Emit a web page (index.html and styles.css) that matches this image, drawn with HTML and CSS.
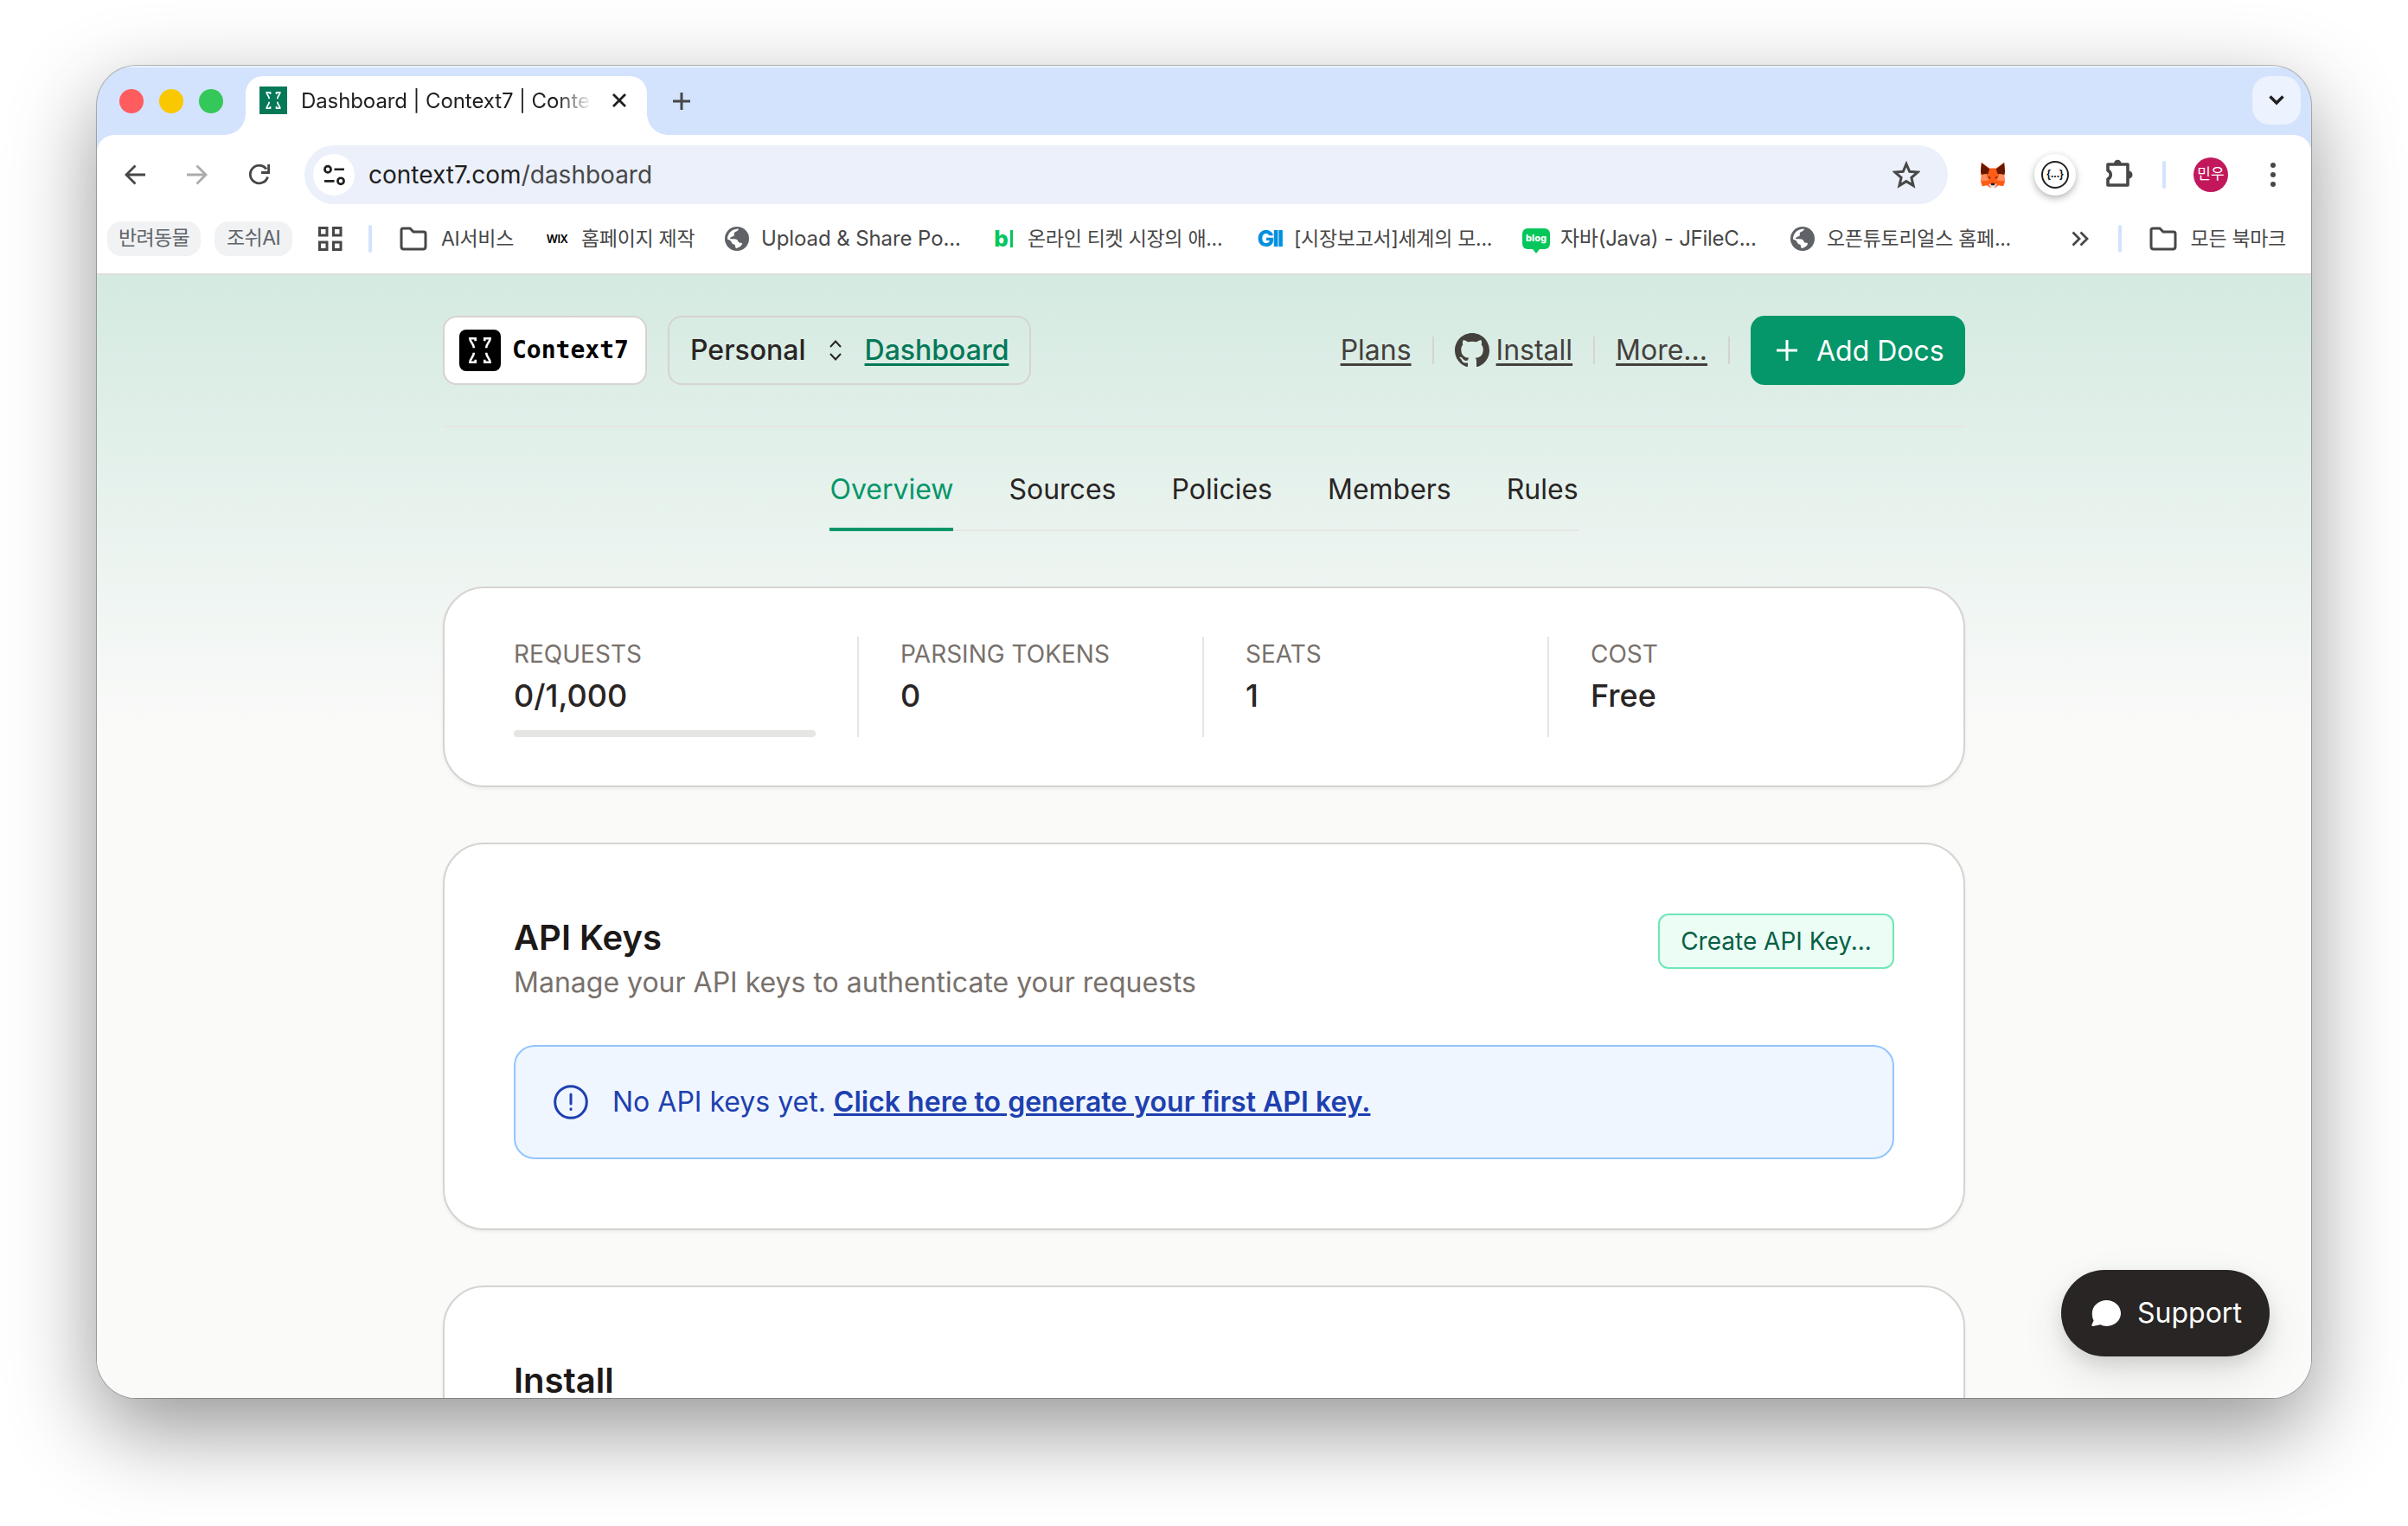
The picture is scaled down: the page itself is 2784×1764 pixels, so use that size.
FILE: index.html
```
<!DOCTYPE html>
<html lang="ko">
<head>
    <meta charset="UTF-8">
    <meta name="viewport" content="width=device-width, initial-scale=1.0">
    <title>Dashboard | Context7</title>
    <link rel="stylesheet" href="styles.css">
</head>
<body>
    <!-- Shared icons -->
    <svg class="sprite" aria-hidden="true">
        <symbol id="icon-folder" viewBox="0 0 32 28">
            <path d="M4 2h8l4 4h12q2 0 2 2v15q0 3-3 3H5q-3 0-3-3V4q0-2 2-2z" fill="none" stroke="currentColor" stroke-width="3"/>
        </symbol>
        <symbol id="icon-globe" viewBox="0 0 28 28">
            <circle cx="14" cy="14" r="14" fill="#5f6368"/>
            <path d="M16 2.500c-1 3.500-4 3-5 4.500s1 3-1 4-4 1-4 3c2 1 6-.5 8 1s1 3 3 3.500 3-.5 3 1.500c-1 3-4 4-6.500 5-2-.5-1-3-2-4s-3-.5-3.500-2.500C7 15.500 4 15 3 14.500 3 8 8 2.500 16 2.500z" fill="#fff"/>
        </symbol>
        <symbol id="icon-context7" viewBox="0 0 28 28">
            <g fill="none" stroke="#fff" stroke-width="1.500">
                <path d="M10.900 7.800V6H7.200c0 2.400 2.600 3.200 2.600 6.400"/>
                <path d="M17.100 7.800V6h3.700c0 2.400-2.600 3.200-2.600 6.400"/>
                <path d="M10.900 20.200V22H7.200c0-2.400 2.600-3.200 2.600-6.400"/>
                <path d="M17.100 20.200V22h3.700c0-2.400-2.600-3.200-2.600-6.400"/>
            </g>
        </symbol>
    </svg>

    <div class="window">
        <!-- Tab strip -->
        <div class="tab-strip">
            <div class="lights">
                <span class="light red"></span>
                <span class="light yellow"></span>
                <span class="light green"></span>
            </div>
            <div class="tab">
                <svg class="favicon"><use href="#icon-context7"/></svg>
                <span class="tab-title">Dashboard | Context7 | Context7</span>
                <svg class="tab-close" viewBox="0 0 16 16"><path d="M1 1l14 14M15 1L1 15" stroke="#1f1f1f" stroke-width="2.800"/></svg>
            </div>
            <svg class="new-tab" viewBox="0 0 20 20"><path d="M10 0v20M0 10h20" stroke="#474747" stroke-width="3"/></svg>
            <div class="tab-search">
                <svg viewBox="0 0 18 12"><path d="M1.500 1.500L9 9l7.500-7.500" fill="none" stroke="#1f1f1f" stroke-width="3.400"/></svg>
            </div>
        </div>

        <!-- Address bar -->
        <div class="toolbar">
            <div class="nav-buttons">
                <svg viewBox="0 0 24 24"><path d="M24 12H2M12.500 1.500L2 12l10.500 10.500" fill="none" stroke="#474747" stroke-width="2.800"/></svg>
                <svg viewBox="0 0 24 24"><path d="M0 12h22M11.500 1.500L22 12 11.500 22.500" fill="none" stroke="#ababab" stroke-width="2.800"/></svg>
                <svg viewBox="0 0 24 24"><path d="M21.500 14.500A10.300 10.300 0 1 1 20 5.500" fill="none" stroke="#474747" stroke-width="2.800"/><path d="M22.600 0v9.500H14" fill="none" stroke="#474747" stroke-width="2.800"/></svg>
            </div>
            <div class="omnibox">
                <div class="site-info">
                    <svg viewBox="0 0 24 24" fill="none" stroke="#1f1f1f" stroke-width="2.600"><circle cx="4.800" cy="5.500" r="3.400"/><path d="M12 5.500h11M1 18.500h11"/><circle cx="19.200" cy="18.500" r="3.400"/></svg>
                </div>
                <span class="url">context7.com<span class="path">/dashboard</span></span>
                <svg class="star" viewBox="0 0 32 32"><path d="M16 3.500l3.700 8.800 9.400.8-7.200 6.200 2.200 9.300-8.100-5-8.100 5 2.200-9.300-7.200-6.200 9.400-.8z" fill="none" stroke="#474747" stroke-width="3"/></svg>
            </div>
            <div class="extensions">
                <svg class="fox" viewBox="0 0 32 32">
                    <path d="M2 1l10 7h8l10-7 1 12-1 5 1 6-2 6-6-1-4 3h-6l-4-3-6 1-2-6 1-6-1-5z" fill="#ff5c16"/>
                    <path d="M2 1l10 8-2 6-8 1-1-4zM30 1L20 9l2 6 8 1 1-4z" fill="#661800"/>
                    <path d="M2 16l6-1 3 8-10 1zM30 16l-6-1-3 8 10 1z" fill="#ff8d5d"/>
                    <path d="M9 18l4 1v2zM23 18l-4 1v2z" fill="#661800"/>
                    <path d="M11 28l4-1h2l4 1-3 4h-4z" fill="#e7ebf6"/>
                    <path d="M14 26h4l.5 3h-5z" fill="#3b1d12"/>
                </svg>
                <div class="json-badge">
                    <div class="json-ring">{...}</div>
                </div>
                <svg class="puzzle" viewBox="0 0 34 34"><path d="M4 7h23v24H4v-7a5.500 5.500 0 0 0 0-10z" fill="none" stroke="#474747" stroke-width="3.600" stroke-linejoin="round"/><path d="M11 6a4.300 4.300 0 0 1 8.600 0zM28 14.500a4.500 4.500 0 0 1 0 9z" fill="#474747"/></svg>
                <span class="separator"></span>
                <div class="avatar">민우</div>
                <svg class="dots" viewBox="0 0 6 28"><circle cx="3" cy="3" r="3"/><circle cx="3" cy="14" r="3"/><circle cx="3" cy="25" r="3"/></svg>
            </div>
        </div>

        <!-- Bookmarks -->
        <div class="bookmarks">
            <span class="chip chip-first">반려동물</span>
            <span class="chip chip-second">조쉬AI</span>
            <svg class="apps" viewBox="0 0 28 28" fill="none" stroke="#474747" stroke-width="3"><path d="M1.500 1.500h8.500V10H1.500zM17.500 1.500H26V10h-8.500zM1.500 18h8.500v8.500H1.500zM17.500 18H26v8.500h-8.500z"/></svg>
            <span class="separator"></span>
            <div class="bookmark bookmark-folder"><svg class="folder"><use href="#icon-folder"/></svg><span class="ko">AI서비스</span></div>
            <div class="bookmark bookmark-wix"><span class="icon wix">WIX</span><span class="ko">홈페이지 제작</span></div>
            <div class="bookmark"><span class="icon"><svg class="globe"><use href="#icon-globe"/></svg></span><span class="en">Upload &amp; Share Po...</span></div>
            <div class="bookmark"><span class="icon blue-letter"><b>b</b><span class="bar"></span></span><span class="ko">온라인 티켓 시장의 애...</span></div>
            <div class="bookmark"><span class="icon gii">GII</span><span class="ko">[시장보고서]세계의 모...</span></div>
            <div class="bookmark"><span class="icon"><span class="blog">blog</span></span><span class="mix">자바(Java) - JFileC...</span></div>
            <div class="bookmark"><span class="icon"><svg class="globe"><use href="#icon-globe"/></svg></span><span class="ko">오픈튜토리얼스 홈페...</span></div>
            <div class="bookmarks-end">
                <svg class="more" viewBox="0 0 20 18"><path d="M1.500 1.500L9 9l-7.500 7.500M10.500 1.500L18 9l-7.500 7.500" fill="none" stroke="#474747" stroke-width="2.800"/></svg>
                <span class="separator"></span>
                <svg class="folder"><use href="#icon-folder"/></svg>
                <span class="ko">모든 북마크</span>
            </div>
        </div>

        <!-- Page -->
        <main class="page">
            <div class="container">
                <header class="header">
                    <a class="brand"><svg class="brand-icon"><use href="#icon-context7"/></svg>Context7</a>
                    <div class="workspace">
                        <span>Personal</span>
                        <svg viewBox="0 0 14 24"><path d="M1 8l6-6.500L13 8M1 16l6 6.500 6-6.500" fill="none" stroke="#292524" stroke-width="2"/></svg>
                        <a class="link-green">Dashboard</a>
                    </div>
                    <nav class="nav">
                        <a class="link">Plans</a>
                        <span class="divider"></span>
                        <span class="install">
                            <svg viewBox="0 0 16 16"><path fill="#44403c" d="M8 0C3.580 0 0 3.580 0 8c0 3.540 2.290 6.530 5.470 7.590.4.070.55-.17.55-.38 0-.19-.01-.82-.01-1.490-2.010.37-2.530-.49-2.690-.94-.09-.23-.48-.94-.82-1.130-.28-.15-.68-.52-.01-.53.63-.01 1.080.58 1.230.82.72 1.210 1.870.87 2.330.66.07-.52.28-.87.51-1.070-1.780-.2-3.640-.89-3.640-3.950 0-.87.31-1.590.82-2.150-.08-.2-.36-1.020.08-2.120 0 0 .67-.21 2.200.82.64-.18 1.320-.27 2-.27s1.360.09 2 .27c1.530-1.040 2.200-.82 2.200-.82.44 1.100.16 1.920.08 2.120.51.56.82 1.270.82 2.150 0 3.070-1.870 3.750-3.650 3.950.29.25.54.73.54 1.480 0 1.070-.01 1.930-.01 2.200 0 .21.15.46.55.38A8.010 8.010 0 0 0 16 8c0-4.420-3.580-8-8-8z"/></svg>
                            <a class="link">Install</a>
                        </span>
                        <span class="divider"></span>
                        <a class="link">More...</a>
                        <span class="divider"></span>
                        <button class="add-btn"><svg viewBox="0 0 24 24"><path d="M12 0v24M0 12h24" stroke="#fff" stroke-width="3"/></svg>Add Docs</button>
                    </nav>
                </header>

                <div class="tabs">
                    <a class="active">Overview</a>
                    <a>Sources</a>
                    <a>Policies</a>
                    <a>Members</a>
                    <a>Rules</a>
                </div>

                <section class="card stats">
                    <div class="stat">
                        <div class="stat-label">REQUESTS</div>
                        <div class="stat-value">0/1,000</div>
                        <div class="progress"></div>
                    </div>
                    <div class="stat">
                        <div class="stat-label">PARSING TOKENS</div>
                        <div class="stat-value">0</div>
                    </div>
                    <div class="stat">
                        <div class="stat-label">SEATS</div>
                        <div class="stat-value">1</div>
                    </div>
                    <div class="stat">
                        <div class="stat-label">COST</div>
                        <div class="stat-value">Free</div>
                    </div>
                </section>

                <section class="card">
                    <div class="card-head">
                        <div>
                            <h2>API Keys</h2>
                            <p>Manage your API keys to authenticate your requests</p>
                        </div>
                        <button class="create-btn">Create API Key...</button>
                    </div>
                    <div class="alert">
                        <svg viewBox="0 0 40 40" fill="none" stroke="#1e40af" stroke-width="3"><circle cx="20" cy="20" r="18.300"/><path d="M20 11v11M20 27.800v.8" stroke-linecap="round"/></svg>
                        <span>No API keys yet. <a>Click here to generate your first API key.</a></span>
                    </div>
                </section>

                <section class="card">
                    <h2>Install</h2>
                </section>
            </div>

            <button class="support">
                <svg viewBox="0 0 34 30"><path d="M17.500 0C26.500 0 34 6.700 34 15s-7.500 15-16.500 15c-2.800 0-5-.6-7-1.700L2 30c-1.500.2-2-.8-1.400-2l2-4.500C1.200 21 .8 18 .8 15 .8 6.700 8.500 0 17.500 0z" fill="#fff"/></svg>
                Support
            </button>
        </main>
    </div>
</body>
</html>
```

FILE: styles.css
```
* {
    box-sizing: border-box;
}

body {
    margin: 0;
    padding: 76px 112px 0;
    height: 1764px;
    overflow: hidden;
    background: #fff;
    font-family: Inter, "Noto Sans CJK KR", sans-serif;
}

svg {
    display: block;
    flex-shrink: 0;
}

button {
    font-family: inherit;
    border: none;
}

.sprite {
    position: absolute;
    width: 0;
    height: 0;
}

.window {
    width: 2560px;
    height: 1540px;
    display: flex;
    flex-direction: column;
    border-radius: 46px;
    overflow: hidden;
    background: #d3e3fd;
    box-shadow: 0 0 0 1px rgba(0, 0, 0, 0.25), 0 36px 100px rgba(0, 0, 0, 0.42);
}

/* Tab strip */
.tab-strip {
    height: 80px;
    display: flex;
    align-items: center;
    padding: 0 12px 0 26px;
    flex-shrink: 0;
    box-shadow: inset 0 2px 0 #eaf1fe;
}

.lights {
    display: flex;
    gap: 18px;
    margin-right: 26px;
}

.light {
    width: 28px;
    height: 28px;
    border-radius: 50%;
}

.lights,
.new-tab {
    position: relative;
    top: 1px;
}

.red {
    background: #ff5c60;
}

.yellow {
    background: #fac800;
}

.green {
    background: #34c759;
}

.tab {
    position: relative;
    align-self: flex-end;
    width: 464px;
    height: 68px;
    display: flex;
    align-items: center;
    padding: 0 24px 12px 16px;
    border-radius: 20px 20px 0 0;
    background: #fff;
}

/* Curved feet of the active tab */
.tab::before,
.tab::after {
    content: "";
    position: absolute;
    bottom: 0;
    width: 24px;
    height: 24px;
}

.tab::before {
    left: -24px;
    background: radial-gradient(circle at 0 0, transparent 23.500px, #fff 24px);
}

.tab::after {
    right: -24px;
    background: radial-gradient(circle at 100% 0, transparent 23.500px, #fff 24px);
}

.favicon {
    width: 32px;
    height: 32px;
    background: #047857;
}

.tab-title {
    width: 334px;
    margin: 0 26px 0 16px;
    overflow: hidden;
    white-space: nowrap;
    font-size: 24px;
    letter-spacing: -0.1px;
    color: #1f1f1f;
    -webkit-mask-image: linear-gradient(90deg, #000 296px, transparent 336px);
    mask-image: linear-gradient(90deg, #000 296px, transparent 336px);
}

.tab-close {
    width: 16px;
    height: 16px;
}

.new-tab {
    width: 20px;
    height: 20px;
    margin-left: 30px;
}

.tab-search {
    width: 56px;
    height: 56px;
    margin-left: auto;
    display: flex;
    align-items: center;
    justify-content: center;
    border-radius: 20px;
    background: #ecf2fe;
}

.tab-search svg {
    width: 18px;
    height: 12px;
}

/* Toolbar */
.toolbar {
    height: 92px;
    display: flex;
    align-items: center;
    flex-shrink: 0;
    padding: 0 41px 0 32px;
    background: #fff;
    border-radius: 20px 20px 0 0;
}

.nav-buttons {
    display: flex;
    gap: 48px;
    margin-right: 40px;
}

.nav-buttons svg {
    width: 24px;
    height: 24px;
}

.omnibox {
    width: 1900px;
    height: 68px;
    display: flex;
    align-items: center;
    padding: 0 32px 0 10px;
    border-radius: 34px;
    background: #ebf0fa;
}

.site-info {
    width: 48px;
    height: 48px;
    display: flex;
    align-items: center;
    justify-content: center;
    border-radius: 50%;
    background: #fff;
}

.site-info svg {
    width: 25px;
    height: 25px;
}

.url {
    margin-left: 16px;
    font-size: 28px;
    color: #1f1f1f;
}

.path {
    color: #474747;
}

.star {
    width: 32px;
    height: 32px;
    margin-left: auto;
}

.extensions {
    flex: 1;
    display: flex;
    align-items: center;
    margin-left: 36px;
}

.fox {
    width: 32px;
    height: 30px;
}

.json-badge {
    width: 48px;
    height: 48px;
    margin-left: 32px;
    display: flex;
    align-items: center;
    justify-content: center;
    border-radius: 50%;
    box-shadow: 0 3px 8px rgba(0, 0, 0, 0.3);
}

.json-ring {
    width: 32px;
    height: 32px;
    border: 2px solid #222;
    border-radius: 50%;
    font-family: "Liberation Sans", sans-serif;
    font-size: 12px;
    font-weight: bold;
    line-height: 27px;
    text-align: center;
    color: #111;
}

.puzzle {
    width: 34px;
    height: 34px;
    margin: -4px 0 0 33px;
}

.separator {
    width: 4px;
    height: 32px;
    border-radius: 2px;
    background: #d3e3fd;
}

.extensions .separator {
    margin: 0 32px 0 33px;
}

.avatar {
    width: 40px;
    height: 40px;
    border-radius: 50%;
    background: #c2185b;
    color: #fff;
    font-size: 17px;
    line-height: 39px;
    text-align: center;
}

.dots {
    width: 6px;
    height: 28px;
    margin-left: auto;
    fill: #474747;
}

/* Bookmarks bar */
.bookmarks {
    height: 70px;
    display: flex;
    align-items: flex-start;
    flex-shrink: 0;
    padding: 8px 29px 0 12px;
    background: #fff;
    border-bottom: 2px solid #dedede;
    color: #474747;
    font-size: 24px;
    line-height: 40px;
    white-space: nowrap;
}

.bookmarks > svg,
.bookmarks > .separator {
    margin-top: 4px;
}

.chip {
    height: 40px;
    border-radius: 16px;
    background: #f1f2f4;
    color: #5f6368;
    font-size: 23px;
    line-height: 39px;
    text-align: center;
    letter-spacing: -0.6px;
}

.chip-first {
    width: 108px;
}

.chip-second {
    width: 90px;
    margin-left: 16px;
}

.bookmarks > .apps {
    width: 28px;
    height: 28px;
    margin: 6px 30px 0;
}

.bookmark {
    width: 308px;
    height: 40px;
    display: flex;
    align-items: center;
}

.bookmark-folder {
    width: 166px;
    margin-left: 32px;
}

.bookmark-wix {
    width: 208px;
}

.folder {
    width: 32px;
    height: 28px;
    margin-right: 16px;
}

.icon {
    width: 32px;
    margin-right: 12px;
    display: flex;
    align-items: center;
    justify-content: center;
}

.ko {
    font-size: 23px;
    letter-spacing: -0.3px;
    line-height: 36px;
    padding-bottom: 1px;
}

.en {
    letter-spacing: -0.1px;
}

.mix {
    letter-spacing: -0.25px;
}

.globe {
    width: 28px;
    height: 28px;
}

.wix {
    color: #000;
    font-size: 13px;
    font-weight: 600;
    letter-spacing: -0.5px;
}

.blue-letter {
    gap: 2px;
    color: #03c75a;
    font-size: 26px;
    line-height: 36px;
}

.blue-letter b {
    font-weight: 800;
}

.bar {
    width: 3px;
    height: 20px;
    background: #03c75a;
}

.gii {
    color: #0090e0;
    font-size: 26px;
    font-weight: 800;
    letter-spacing: -1.800px;
}

.blog {
    position: relative;
    width: 32px;
    height: 24px;
    border-radius: 6px;
    background: #03c75a;
    color: #fff;
    font-size: 11px;
    font-weight: 800;
    line-height: 23px;
    text-align: center;
}

.blog::after {
    content: "";
    position: absolute;
    left: 12px;
    top: 24px;
    border: 4px solid transparent;
    border-top: 5px solid #03c75a;
    border-bottom: 0;
}

.bookmarks-end {
    margin-left: auto;
    height: 40px;
    display: flex;
    align-items: center;
}

.more {
    width: 20px;
    height: 18px;
}

.bookmarks-end .separator {
    margin: 0 32px 0 34px;
}

/* Page */
.page {
    position: relative;
    flex: 1;
    overflow: hidden;
    background: linear-gradient(180deg, #d4eae1 0, #fafaf9 520px) #fafaf9;
    color: #292524;
    font-size: 32px;
    line-height: 48px;
}

.container {
    width: 1760px;
    margin: 0 auto;
}

.header {
    height: 176px;
    display: flex;
    align-items: flex-start;
    padding-top: 47px;
    border-bottom: 2px solid #e7e5e4;
}

.brand {
    width: 236px;
    height: 80px;
    display: flex;
    align-items: center;
    padding-left: 17px;
    border: 2px solid #d6d3d1;
    border-radius: 16px;
    background: #fff;
    color: #000;
    font-family: "DejaVu Sans Mono", monospace;
    font-size: 28px;
    font-weight: bold;
}

.brand-icon {
    width: 48px;
    height: 48px;
    margin-right: 13px;
    border-radius: 8px;
    background: #000;
}

.workspace {
    width: 420px;
    height: 80px;
    display: flex;
    align-items: center;
    margin-left: 24px;
    padding: 0 24px;
    border: 2px solid #d6d3d1;
    border-radius: 16px;
    font-weight: 500;
}

.workspace svg {
    width: 14px;
    height: 24px;
    margin: 0 27px;
}

.link,
.link-green {
    text-decoration: underline;
    text-decoration-thickness: 3px;
    text-underline-offset: 4px;
    text-decoration-skip-ink: none;
}

.link {
    color: #44403c;
}

.link-green {
    color: #047857;
}

.nav {
    margin-left: auto;
    height: 80px;
    display: flex;
    align-items: center;
    gap: 24px;
}

.divider {
    width: 2px;
    height: 32px;
    background: #d6d3d1;
}

.install {
    display: flex;
    align-items: center;
    gap: 8px;
}

.install svg {
    width: 40px;
    height: 40px;
}

.add-btn {
    width: 248px;
    height: 80px;
    display: flex;
    align-items: center;
    gap: 22px;
    padding: 0 0 0 30px;
    border-radius: 16px;
    background: #059669;
    color: #fff;
    font-size: 32px;
}

.add-btn svg {
    width: 24px;
    height: 24px;
}

.tabs {
    width: fit-content;
    height: 72px;
    display: flex;
    gap: 64px;
    margin: 48px auto 64px;
    border-bottom: 2px solid #e7e5e4;
}

.tabs a {
    height: 72px;
}

.tabs .active {
    color: #059669;
    border-bottom: 4px solid #059669;
}

.card {
    margin-bottom: 64px;
    padding: 80px;
    border: 2px solid #d6d3d1;
    border-radius: 48px;
    background: #fff;
    box-shadow: 0 2px 4px rgba(0, 0, 0, 0.06);
}

.stats {
    display: grid;
    grid-template-columns: repeat(4, 1fr);
    padding: 56px 80px;
}

.stat {
    height: 116px;
    padding: 0 48px;
    border-right: 2px solid #e7e5e4;
}

.stat:first-child {
    padding-left: 0;
}

.stat:last-child {
    border-right: none;
}

.stat-label {
    font-size: 28px;
    line-height: 40px;
    color: #78716c;
}

.stat-value {
    font-size: 36px;
    font-weight: 500;
    line-height: 56px;
}

.progress {
    height: 8px;
    margin-top: 12px;
    border-radius: 4px;
    background: #e5e5e4;
}

.card-head {
    display: flex;
    justify-content: space-between;
    align-items: flex-start;
    margin-bottom: 48px;
}

.card h2 {
    margin: 0;
    font-size: 40px;
    font-weight: 600;
    line-height: 56px;
    color: #1c1917;
}

.card p {
    margin: 0;
    color: #78716c;
}

.create-btn {
    width: 273px;
    height: 64px;
    padding: 0;
    border: 2px solid #6ee7b7;
    border-radius: 12px;
    background: #ecfdf5;
    color: #065f46;
    font-size: 28px;
}

.alert {
    height: 132px;
    display: flex;
    align-items: center;
    gap: 28px;
    padding: 0 44px;
    border: 2px solid #93c5fd;
    border-radius: 24px;
    background: #eff6ff;
    color: #1e40af;
}

.alert svg {
    width: 40px;
    height: 40px;
}

.alert a {
    font-weight: 600;
    text-decoration: underline;
    text-decoration-thickness: 3px;
}

/* Floating button over the page */
.support {
    position: absolute;
    right: 48px;
    bottom: 48px;
    width: 241px;
    height: 100px;
    display: flex;
    align-items: center;
    gap: 19px;
    padding: 0 0 1px 35px;
    border-radius: 50px;
    background: #292524;
    color: #fff;
    font-size: 32px;
    box-shadow: 0 20px 50px rgba(0, 0, 0, 0.1), 0 8px 20px rgba(0, 0, 0, 0.1);
}

.support svg {
    width: 34px;
    height: 30px;
}
```
